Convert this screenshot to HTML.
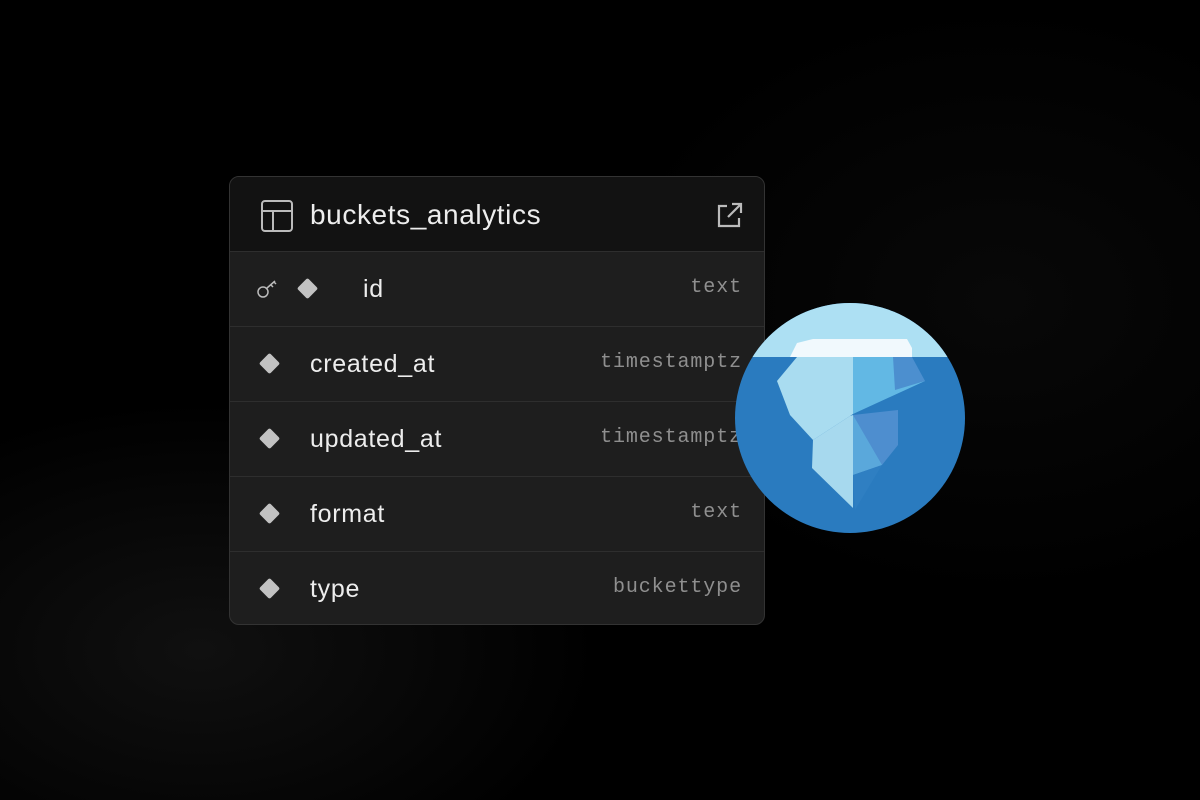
<!DOCTYPE html>
<html><head><style>
body{margin:0;width:1200px;height:800px;background:#000;overflow:hidden;position:relative;font-family:"Liberation Sans",sans-serif}
.bg{position:absolute;inset:0;background:radial-gradient(ellipse 400px 250px at 200px 650px,#101010,transparent),radial-gradient(ellipse 400px 300px at 1000px 300px,#080808,transparent)}
.card{position:absolute;left:229px;top:176px;width:534px;height:447px;border:1px solid #333;border-radius:10px;background:#1e1e1e;overflow:hidden}
.hd{height:74px;background:#121212;border-bottom:1px solid #2e2e2e;position:relative}
.hd .t{position:absolute;left:80px;top:22px;font-size:28px;letter-spacing:0.6px;color:#ededed}
.row{height:74px;border-bottom:1px solid #2e2e2e;position:relative}
.row:last-child{border-bottom:none}
.n{position:absolute;left:80px;top:23px;font-size:25px;letter-spacing:0.7px;color:#ededed}
.ty{position:absolute;right:22px;top:24px;font-family:"Liberation Mono",monospace;font-size:20px;letter-spacing:0.9px;color:#8f8f8f}
.d{position:absolute;left:32px;top:29px;width:15px;height:15px;background:#c2c2c2;transform:rotate(45deg);border-radius:2px}
</style></head><body>
<div class="bg"></div>
<div class="card">
<div class="hd">
<svg style="position:absolute;left:30px;top:22px" width="34" height="34" viewBox="0 0 34 34" fill="none" stroke="#bbb" stroke-width="2"><rect x="2" y="2" width="30" height="30" rx="3"/><path d="M2 12H32M13 12V32"/></svg>
<div class="t">buckets_analytics</div>
<svg style="position:absolute;right:20px;top:24px" width="30" height="30" viewBox="0 0 30 30" fill="none" stroke="#bbb" stroke-width="2.2"><path d="M13 5H5V25H25V17M18 3H27V12M27 3L14 16"/></svg>
</div>
<div class="row"><svg style="position:absolute;left:26px;top:26px" width="26" height="22" viewBox="0 0 26 22" fill="none" stroke="#bbb" stroke-width="1.5"><circle cx="7" cy="14" r="5"/><path d="M11 10L19 3M15 7l2 2M18 4l2 2"/></svg><div class="d" style="left:70px"></div><div class="n" style="left:133px">id</div><div class="ty">text</div></div>
<div class="row"><div class="d"></div><div class="n">created_at</div><div class="ty">timestamptz</div></div>
<div class="row"><div class="d"></div><div class="n">updated_at</div><div class="ty">timestamptz</div></div>
<div class="row"><div class="d"></div><div class="n">format</div><div class="ty">text</div></div>
<div class="row"><div class="d"></div><div class="n">type</div><div class="ty">buckettype</div></div>
</div>
<svg style="position:absolute;left:0;top:0" width="1200" height="800">
<defs><clipPath id="c"><circle cx="850" cy="418" r="115"/></clipPath></defs>
<g clip-path="url(#c)">
<rect x="730" y="300" width="240" height="240" fill="#2a7bbf"/>
<rect x="730" y="300" width="240" height="57" fill="#ade0f3"/>
<polygon points="790,357 797,343 813,339 907,339 912,348 912,357" fill="#f1f9fd"/>
<polygon points="797,357 853,357 853,414 850,416 813,440 790,415 777,381" fill="#a9dcf0"/>
<polygon points="813,440 850,416 853,415 853,508 812,468" fill="#a7d9ee"/>
<polygon points="853,357 893,357 925,381 853,414" fill="#62b8e4"/>
<polygon points="893,357 912,357 925,381 895,390" fill="#4c8fcf"/>
<polygon points="853,415 898,410 898,445 882,465 853,475" fill="#4e8ecf"/>
<polygon points="853,415 882,465 853,475" fill="#5aa8db"/>
<polygon points="853,475 882,465 855,510" fill="#2f7fc2"/>
</g>
</svg>
</body></html>
